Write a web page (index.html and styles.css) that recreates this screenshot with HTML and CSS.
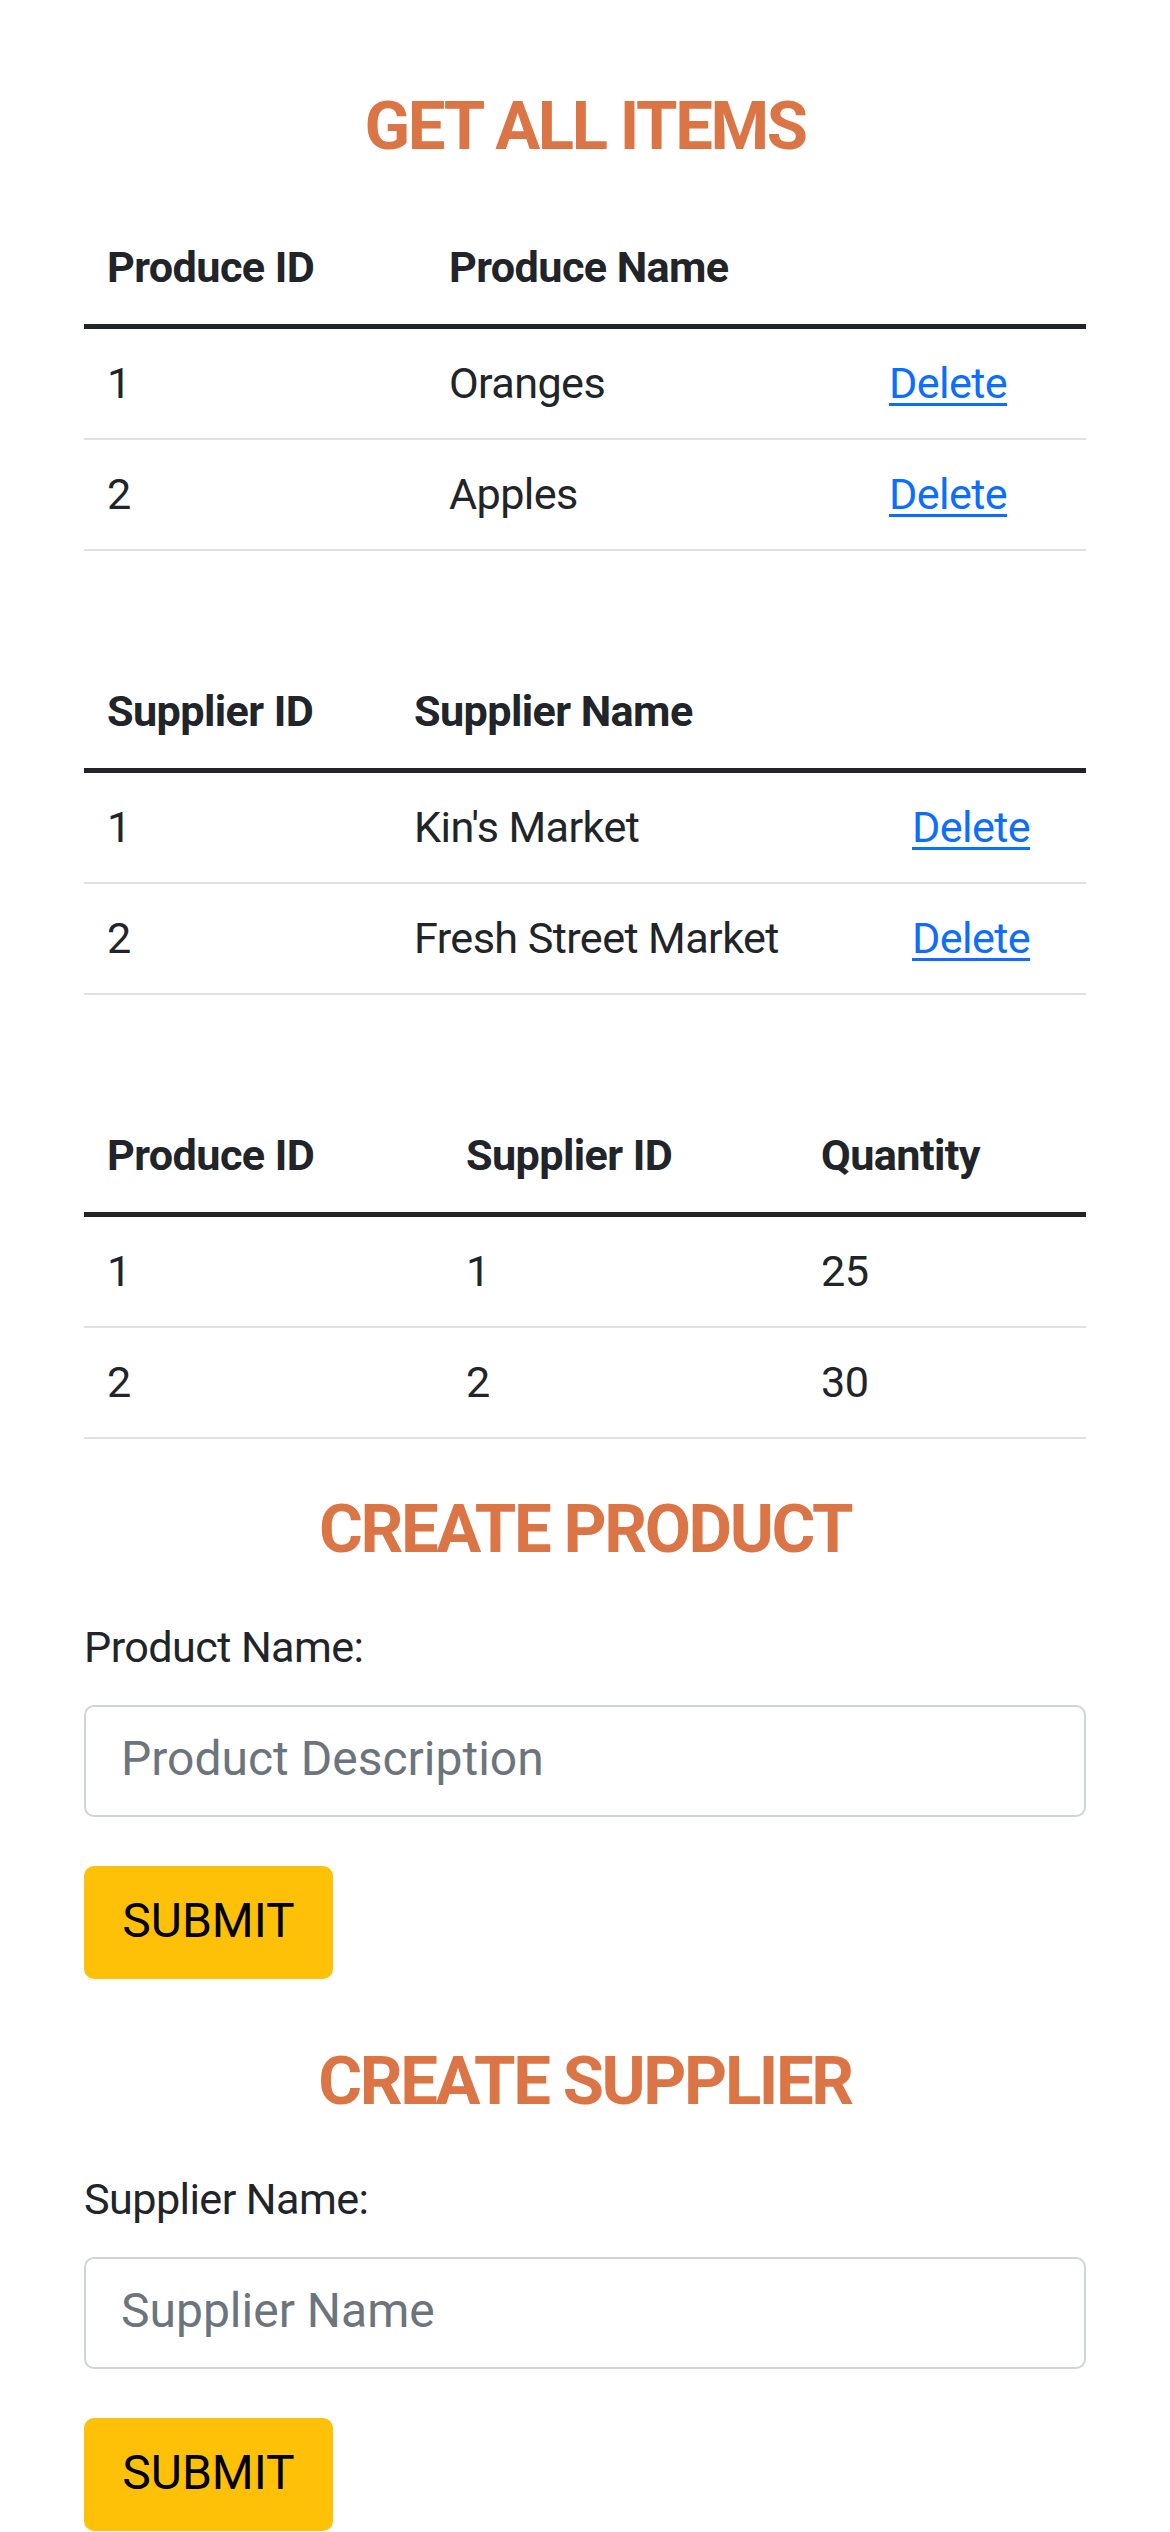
FILE: index.html
```html
<!DOCTYPE html>
<html lang="en">
<head>
<meta charset="utf-8">
<title>Produce Inventory</title>
<link rel="stylesheet" href="styles.css">
</head>
<body>
<main class="page">
  <h2 class="section-title">GET ALL ITEMS</h2>

  <table class="data-table">
    <colgroup>
      <col class="w-342"><col class="w-440"><col class="w-220">
    </colgroup>
    <thead>
      <tr><th>Produce ID</th><th>Produce Name</th><th></th></tr>
    </thead>
    <tbody>
      <tr><td>1</td><td>Oranges</td><td><a href="#" class="link">Delete</a></td></tr>
      <tr><td>2</td><td>Apples</td><td><a href="#" class="link">Delete</a></td></tr>
    </tbody>
  </table>

  <table class="data-table">
    <colgroup>
      <col class="w-307"><col class="w-498"><col class="w-197">
    </colgroup>
    <thead>
      <tr><th>Supplier ID</th><th>Supplier Name</th><th></th></tr>
    </thead>
    <tbody>
      <tr><td>1</td><td>Kin's Market</td><td><a href="#" class="link">Delete</a></td></tr>
      <tr><td>2</td><td>Fresh Street Market</td><td><a href="#" class="link">Delete</a></td></tr>
    </tbody>
  </table>

  <table class="data-table data-table--last">
    <colgroup>
      <col class="w-359"><col class="w-355"><col class="w-288">
    </colgroup>
    <thead>
      <tr><th>Produce ID</th><th>Supplier ID</th><th>Quantity</th></tr>
    </thead>
    <tbody>
      <tr><td>1</td><td>1</td><td>25</td></tr>
      <tr><td>2</td><td>2</td><td>30</td></tr>
    </tbody>
  </table>

  <h2 class="section-title">CREATE PRODUCT</h2>
  <form class="create-form">
    <label class="field-label" for="product-name">Product Name:</label>
    <input class="field-input" id="product-name" type="text" placeholder="Product Description">
    <button class="submit-btn" type="button">SUBMIT</button>
  </form>

  <h2 class="section-title">CREATE SUPPLIER</h2>
  <form class="create-form">
    <label class="field-label" for="supplier-name">Supplier Name:</label>
    <input class="field-input" id="supplier-name" type="text" placeholder="Supplier Name">
    <button class="submit-btn" type="button">SUBMIT</button>
  </form>
</main>
</body>
</html>
```
FILE: styles.css
```css
* {
  box-sizing: border-box;
}

html, body {
  margin: 0;
  padding: 0;
  background: #ffffff;
}

body {
  font-family: Roboto, "Liberation Sans", Arial, sans-serif;
  color: #212529;
  font-size: 43.2px;
  line-height: 64.8px;
  letter-spacing: -0.6px;
}

.page {
  padding: 86px 84px 0;
}

.section-title {
  margin: 0 0 47px;
  font-size: 67px;
  line-height: 80px;
  font-weight: 700;
  letter-spacing: -2.4px;
  color: #dc7546;
  text-align: center;
}

.data-table {
  width: 100%;
  table-layout: fixed;
  border-collapse: separate;
  border-spacing: 0;
  margin: 0 0 106px;
}

.data-table--last {
  margin-bottom: 50px;
}

.w-342 { width: 342px; }
.w-440 { width: 440px; }
.w-220 { width: 220px; }
.w-307 { width: 307px; }
.w-498 { width: 498px; }
.w-197 { width: 197px; }
.w-359 { width: 359px; }
.w-355 { width: 355px; }
.w-288 { width: 288px; }

.data-table th {
  text-align: left;
  font-weight: 700;
  line-height: 65px;
  padding: 22px 22px 24px 23px;
  border-bottom: 5px solid #212529;
  vertical-align: bottom;
}

.data-table td {
  line-height: 65px;
  padding: 22px 22px 22px 23px;
  border-bottom: 2px solid #dee2e6;
  vertical-align: top;
}

.link {
  color: #0d6efd;
  text-decoration: underline;
  text-decoration-thickness: 3px;
  text-underline-offset: 5px;
}

.create-form {
  display: flex;
  flex-direction: column;
  align-items: flex-start;
  margin: 0 0 62px;
}

.field-label {
  display: block;
  font-size: 43.2px;
  line-height: 64.8px;
  margin-bottom: 24px;
}

.field-input {
  display: block;
  width: 100%;
  height: 112px;
  margin: 0 0 49px;
  padding: 0 35px 4px;
  font-family: Roboto, "Liberation Sans", Arial, sans-serif;
  font-size: 48px;
  letter-spacing: 0;
  color: #212529;
  background: #ffffff;
  border: 2px solid #ced4da;
  border-radius: 10px;
  outline: none;
}

.field-input::placeholder {
  color: #6c757d;
  opacity: 1;
}

.submit-btn {
  width: 249px;
  height: 113px;
  padding: 0 0 3px;
  font-family: Roboto, "Liberation Sans", Arial, sans-serif;
  font-size: 48px;
  line-height: 1;
  letter-spacing: 0;
  color: #000000;
  background: #ffc107;
  border: none;
  border-radius: 10px;
  text-align: center;
}
```
